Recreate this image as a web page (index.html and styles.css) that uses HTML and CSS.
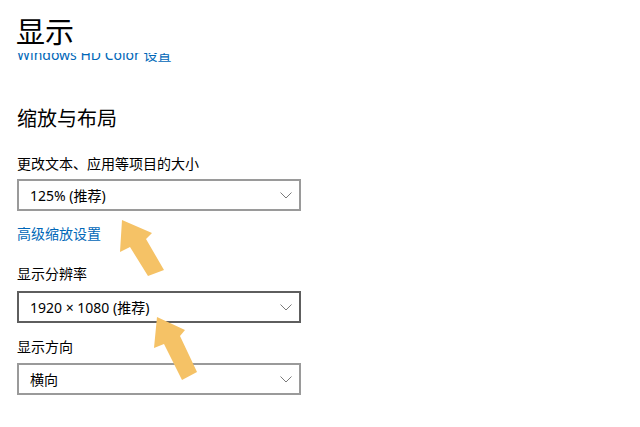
FILE: index.html
```html
<!DOCTYPE html>
<html lang="zh-CN">
<head>
    <meta charset="UTF-8">
    <meta name="viewport" content="width=device-width, initial-scale=1.0">
    <title>显示</title>
    <link rel="stylesheet" href="styles.css">
</head>
<body>

    <div class="page-header">
        <h1 class="page-title">显示</h1>
    </div>

    <div class="page-scroll">
        <!-- link scrolled half under the header -->
        <div class="hd-clip">
            <a class="link hd-link" href="#">Windows HD Color 设置</a>
        </div>

        <h2 class="section-title">缩放与布局</h2>

        <div class="field-label label-scale">更改文本、应用等项目的大小</div>
        <div class="select select-scale">
            <span>125% (推荐)</span>
            <svg class="chevron" width="12" height="7" viewBox="0 0 12 7"><path d="M0.5 0.5 L6 6 L11.5 0.5" fill="none" stroke="#7a7a7a" stroke-width="1"/></svg>
        </div>

        <a class="link link-advanced" href="#">高级缩放设置</a>

        <div class="field-label label-resolution">显示分辨率</div>
        <div class="select select-hover select-resolution">
            <span>1920 × 1080 (推荐)</span>
            <svg class="chevron" width="12" height="7" viewBox="0 0 12 7"><path d="M0.5 0.5 L6 6 L11.5 0.5" fill="none" stroke="#7a7a7a" stroke-width="1"/></svg>
        </div>

        <div class="field-label label-orientation">显示方向</div>
        <div class="select select-orientation">
            <span>横向</span>
            <svg class="chevron" width="12" height="7" viewBox="0 0 12 7"><path d="M0.5 0.5 L6 6 L11.5 0.5" fill="none" stroke="#7a7a7a" stroke-width="1"/></svg>
        </div>
    </div>

    <!-- pointer arrows drawn over the settings -->
    <svg class="arrows" width="640" height="427" viewBox="0 0 640 427">
        <polygon points="122,220 152,233 146,239 164,270 148,276 130,247 120,252" fill="#f5c266"/>
        <polygon points="157,317 185,330 180,336 197,372 182,380 164,344 154,348" fill="#f5c266"/>
    </svg>

</body>
</html>
```

FILE: styles.css
```css
body {
    font-family: "Noto Sans", "Noto Sans CJK SC", sans-serif;
    background: #fff;
    color: #000;
    margin: 0;
    position: relative;
    width: 640px;
    height: 427px;
    overflow: hidden;
}

.page-header {
    height: 53px;
    padding-left: 16px;
    background: #fff;
}

.page-title {
    margin: 0;
    padding-top: 16px;
    font-family: "Noto Sans CJK SC", sans-serif;
    font-size: 29px;
    line-height: 29px;
    font-weight: normal;
}

.page-scroll {
    display: flex;
    flex-direction: column;
    align-items: flex-start;
    padding-left: 17px;
}

.hd-clip {
    height: 12px;
    overflow: hidden;
    display: flex;
    align-items: flex-end;
}

.link {
    color: #0067b8;
    text-decoration: none;
    font-size: 14px;
    line-height: 20px;
}

.hd-link {
    margin-bottom: 0;
}

.section-title {
    margin: 39px 0 0 0;
    font-family: "Noto Sans CJK SC", sans-serif;
    font-size: 20px;
    line-height: 28px;
    font-weight: normal;
}

.field-label {
    font-size: 14px;
    line-height: 20px;
}

.label-scale { margin-top: 22px; }
.link-advanced { margin-top: 13px; }
.label-resolution { margin-top: 20px; }
.label-orientation { margin-top: 14px; }

.select {
    box-sizing: border-box;
    width: 284px;
    height: 32px;
    border: 2px solid #9a9a9a;
    padding: 0 7px 0 11px;
    display: flex;
    align-items: center;
    justify-content: space-between;
    font-size: 14px;
}

.select-hover {
    border-color: #5e5e5e;
}

.select-scale { margin-top: 5px; }
.select-resolution { margin-top: 7px; }
.select-orientation { margin-top: 6px; }

.chevron {
    display: block;
}

.arrows {
    position: absolute;
    left: 0;
    top: 0;
    z-index: 2;
    pointer-events: none;
}
```
